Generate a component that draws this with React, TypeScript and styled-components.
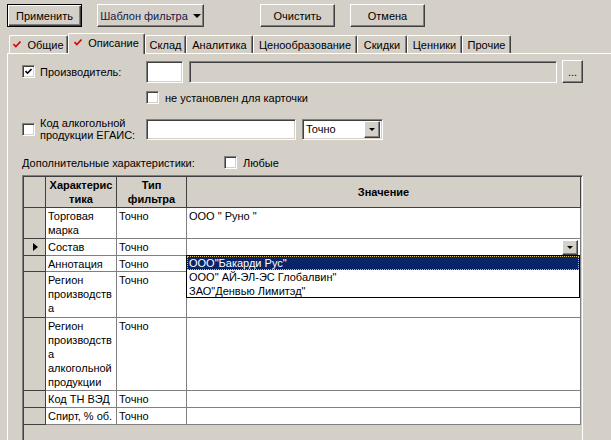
import React from 'react';
import styled, { createGlobalStyle, css } from 'styled-components';

const GlobalStyle = createGlobalStyle`
    html, body {
        margin: 0;
        padding: 0;
        background: #d4d0c8;
    }
    body {
        font-family: "Liberation Sans", Arial, sans-serif;
        font-size: 11px;
        color: #000;
    }
`

const raised = css`
    border: 1px solid;
    border-color: #fff #404040 #404040 #fff;
    box-shadow: inset -1px -1px #808080, inset 1px 1px #d4d0c8;
`

const sunken = css`
    border: 1px solid;
    border-color: #808080 #fff #fff #808080;
    box-shadow: inset 1px 1px #404040, inset -1px -1px #d4d0c8;
`

const Page = styled.div`
    width: 611px;
    height: 440px;
    overflow: hidden;
    box-sizing: border-box;
    padding-top: 4px;
`

const Toolbar = styled.div`
    display: flex;
    align-items: center;
    height: 23px;
    padding-left: 7px;
`

const Button = styled.button<{ $w: number; $ml?: number; $isDefault?: boolean; $navy?: boolean }>`
    box-sizing: border-box;
    width: ${p => p.$w}px;
    height: 23px;
    margin-left: ${p => p.$ml ?? 0}px;
    padding: 0;
    font-family: "Liberation Sans", Arial, sans-serif;
    font-size: 11px;
    color: ${p => p.$navy ? '#16164a' : '#000'};
    background: #d4d0c8;
    display: flex;
    align-items: center;
    justify-content: center;
    gap: 5px;
    ${p => p.$isDefault
        ? css`
            border: 1px solid #000;
            box-shadow: inset 1px 1px #fff, inset -1px -1px #404040, inset -2px -2px #808080;
        `
        : raised}
`

const DownArrow = styled.span<{ $size?: number }>`
    width: 0;
    height: 0;
    border-left: ${p => p.$size ?? 4}px solid transparent;
    border-right: ${p => p.$size ?? 4}px solid transparent;
    border-top: ${p => p.$size ?? 4}px solid #000;
`

const TabStrip = styled.div`
    display: flex;
    align-items: flex-end;
    height: 20px;
    margin-top: 6px;
    padding-left: 9px;
    position: relative;
    z-index: 1;
`

const Tab = styled.div<{ $w: number; $active?: boolean }>`
    box-sizing: border-box;
    width: ${p => p.$w}px;
    height: ${p => p.$active ? 21 : 18}px;
    margin-bottom: ${p => p.$active ? -1 : 0}px;
    background: #d4d0c8;
    border-top: 1px solid #fff;
    border-left: 1px solid #fff;
    border-right: 1px solid #404040;
    box-shadow: inset -1px 0 #808080;
    border-radius: 2px 2px 0 0;
    display: flex;
    align-items: center;
    justify-content: center;
    gap: 6px;
    padding-bottom: ${p => p.$active ? 3 : 0}px;
    white-space: nowrap;
`

const Panel = styled.div`
    margin-left: 7px;
    height: 400px;
    border-top: 1px solid #fff;
    border-left: 1px solid #fff;
    padding: 6px 0 0 14px;
`

const FormRow = styled.div<{ $mt?: number; $h: number; $pl?: number }>`
    display: flex;
    align-items: center;
    height: ${p => p.$h}px;
    margin-top: ${p => p.$mt ?? 0}px;
    padding-left: ${p => p.$pl ?? 0}px;
`

const LabelCell = styled.div<{ $w: number }>`
    display: flex;
    align-items: center;
    gap: 5px;
    width: ${p => p.$w}px;
    flex-shrink: 0;
`

const LabelText = styled.span`
    line-height: 12px;
    white-space: pre-line;
`

const Box = styled.span`
    box-sizing: border-box;
    width: 13px;
    height: 13px;
    background: #fff;
    flex-shrink: 0;
    display: flex;
    align-items: center;
    justify-content: center;
    ${sunken}
`

const Field = styled.div<{ $w: number; $h: number; $ml?: number; $disabled?: boolean }>`
    box-sizing: border-box;
    width: ${p => p.$w}px;
    height: ${p => p.$h}px;
    margin-left: ${p => p.$ml ?? 0}px;
    background: ${p => p.$disabled ? '#d4d0c8' : '#fff'};
    display: flex;
    align-items: center;
    padding-left: 3px;
    flex-shrink: 0;
    ${sunken}
`

const ComboButton = styled.span<{ $w: number; $h: number }>`
    box-sizing: border-box;
    width: ${p => p.$w}px;
    height: ${p => p.$h}px;
    margin-left: auto;
    margin-right: 2px;
    background: #d4d0c8;
    display: flex;
    align-items: center;
    justify-content: center;
    ${raised}
`

const SmallButton = styled.div`
    box-sizing: border-box;
    width: 21px;
    height: 23px;
    margin-left: 5px;
    display: flex;
    align-items: flex-end;
    justify-content: center;
    padding-bottom: 6px;
    line-height: 8px;
    ${raised}
`

const CheckLabel = styled.span`
    margin-left: 6px;
`

const Grid = styled.div`
    box-sizing: border-box;
    width: 561px;
    height: 280px;
    margin-top: 5px;
    background: #d4d0c8;
    position: relative;
    border: 1px solid;
    border-color: #808080 #fff #fff #808080;
    box-shadow: inset 1px 1px #404040, inset -1px -1px #d4d0c8;
    padding: 1px;
    font-family: "Liberation Sans", Arial, sans-serif;
`

const GridRow = styled.div<{ $h: number }>`
    display: flex;
    height: ${p => p.$h}px;
`

const Indicator = styled.div`
    box-sizing: border-box;
    width: 22px;
    flex-shrink: 0;
    background: #d4d0c8;
    border-right: 1px solid #404040;
    border-bottom: 1px solid #404040;
    display: flex;
    align-items: center;
    justify-content: center;
`

const RowArrow = styled.span`
    width: 0;
    height: 0;
    border-top: 4px solid transparent;
    border-bottom: 4px solid transparent;
    border-left: 5px solid #000;
    margin-left: 2px;
`

const HeadCell = styled.div<{ $w?: number }>`
    box-sizing: border-box;
    ${p => p.$w ? `width: ${p.$w}px;` : 'flex: 1;'}
    flex-shrink: 0;
    background: #d4d0c8;
    border-right: 1px solid #404040;
    border-bottom: 1px solid #404040;
    font-weight: bold;
    line-height: 14px;
    white-space: pre-line;
    text-align: center;
    display: flex;
    align-items: center;
    justify-content: center;
`

const Cell = styled.div<{ $w?: number }>`
    box-sizing: border-box;
    ${p => p.$w ? `width: ${p.$w}px;` : 'flex: 1;'}
    flex-shrink: 0;
    position: relative;
    background: #fff;
    border-right: 1px solid #808080;
    border-bottom: 1px solid #808080;
    padding: 1px 0 0 2px;
    line-height: 14px;
    white-space: pre-line;
    display: flex;
    align-items: flex-start;
`

const Dropdown = styled.div`
    position: absolute;
    top: 16px;
    left: -1px;
    box-sizing: border-box;
    width: 394px;
    height: 43px;
    background: #fff;
    border: 1px solid #000;
    z-index: 2;
    white-space: nowrap;
`

const DropItem = styled.div<{ $selected?: boolean }>`
    box-sizing: border-box;
    height: 14px;
    line-height: 12px;
    padding-left: 2px;
    ${p => p.$selected && css`
        background: #0a246a;
        color: #fff;
        border: 1px dotted #d8c070;
        padding-left: 1px;
    `}
    ${p => !p.$selected && css`
        border: 1px solid transparent;
        padding-left: 1px;
    `}
`

const Tick = ({ color = '#e00000' }: { color?: string }) => (
    <svg width="8" height="7" viewBox="0 0 8 7">
        <polyline points="0.5,3 2.8,5.5 7.5,0.5" fill="none" stroke={color} strokeWidth="1.6" />
    </svg>
)

const Checkbox = ({ checked }: { checked?: boolean }) => (
    <Box>
        {checked && (
            <svg width="7" height="7" viewBox="0 0 7 7">
                <polyline points="0.5,3 2.5,5.2 6.5,1" fill="none" stroke="#000" strokeWidth="1.6" />
            </svg>
        )}
    </Box>
)

const tabs = [
    { label: 'Общие', w: 59, tick: true },
    { label: 'Описание', w: 77, tick: true, active: true },
    { label: 'Склад', w: 41 },
    { label: 'Аналитика', w: 67 },
    { label: 'Ценообразование', w: 104 },
    { label: 'Скидки', w: 50 },
    { label: 'Ценники', w: 55 },
    { label: 'Прочие', w: 49 },
]

const rows = [
    { name: 'Торговая\nмарка', h: 31, value: 'ООО " Руно "' },
    { name: 'Состав', h: 17, current: true },
    { name: 'Аннотация', h: 16 },
    { name: 'Регион\nпроизводств\nа', h: 46 },
    { name: 'Регион\nпроизводств\nа\nалкогольной\nпродукции', h: 73 },
    { name: 'Код ТН ВЭД', h: 17 },
    { name: 'Спирт, % об.', h: 17 },
]

const options = ['ООО"Бакарди Рус"', 'ООО" АЙ-ЭЛ-ЭС Глобалвин"', 'ЗАО"Денвью Лимитэд"']

function App(): JSX.Element {
    return (
        <Page>
            <GlobalStyle />
            <Toolbar>
                <Button $w={75} $isDefault>Применить</Button>
                <Button $w={107} $ml={15} $navy>Шаблон фильтра <DownArrow /></Button>
                <Button $w={75} $ml={56}>Очистить</Button>
                <Button $w={75} $ml={15}>Отмена</Button>
            </Toolbar>

            <TabStrip>
                {tabs.map(t => (
                    <Tab key={t.label} $w={t.w} $active={t.active}>
                        {t.tick && <Tick />}
                        <span>{t.label}</span>
                    </Tab>
                ))}
            </TabStrip>

            <Panel>
                <FormRow $h={23}>
                    <LabelCell $w={124}>
                        <Checkbox checked />
                        <LabelText>Производитель:</LabelText>
                    </LabelCell>
                    <Field $w={37} $h={22} />
                    <Field $w={368} $h={22} $ml={6} $disabled />
                    <SmallButton>...</SmallButton>
                </FormRow>

                <FormRow $h={17} $mt={6} $pl={124}>
                    <Checkbox />
                    <CheckLabel>не установлен для карточки</CheckLabel>
                </FormRow>

                <FormRow $h={22} $mt={12}>
                    <LabelCell $w={124}>
                        <Checkbox />
                        <LabelText>{'Код алкогольной\nпродукции ЕГАИС:'}</LabelText>
                    </LabelCell>
                    <Field $w={150} $h={21} />
                    <Field $w={81} $h={21} $ml={6}>
                        Точно
                        <ComboButton $w={16} $h={17}><DownArrow $size={3} /></ComboButton>
                    </Field>
                </FormRow>

                <FormRow $h={15} $mt={15}>
                    <LabelCell $w={202}>
                        <LabelText>Дополнительные характеристики:</LabelText>
                    </LabelCell>
                    <Checkbox />
                    <CheckLabel>Любые</CheckLabel>
                </FormRow>

                <Grid>
                    <GridRow $h={31}>
                        <Indicator />
                        <HeadCell $w={71}>{'Характерис\nтика'}</HeadCell>
                        <HeadCell $w={70}>{'Тип\nфильтра'}</HeadCell>
                        <HeadCell>Значение</HeadCell>
                    </GridRow>
                    {rows.map(r => (
                        <GridRow key={r.name} $h={r.h}>
                            <Indicator>{r.current && <RowArrow />}</Indicator>
                            <Cell $w={71}>{r.name}</Cell>
                            <Cell $w={70}>Точно</Cell>
                            <Cell>
                                {r.value}
                                {r.current && (
                                    <>
                                        <ComboButton $w={16} $h={15}><DownArrow $size={3} /></ComboButton>
                                        <Dropdown>
                                            {options.map((o, i) => (
                                                <DropItem key={o} $selected={i === 0}>{o}</DropItem>
                                            ))}
                                        </Dropdown>
                                    </>
                                )}
                            </Cell>
                        </GridRow>
                    ))}
                </Grid>
            </Panel>
        </Page>
    );
}

export default App
